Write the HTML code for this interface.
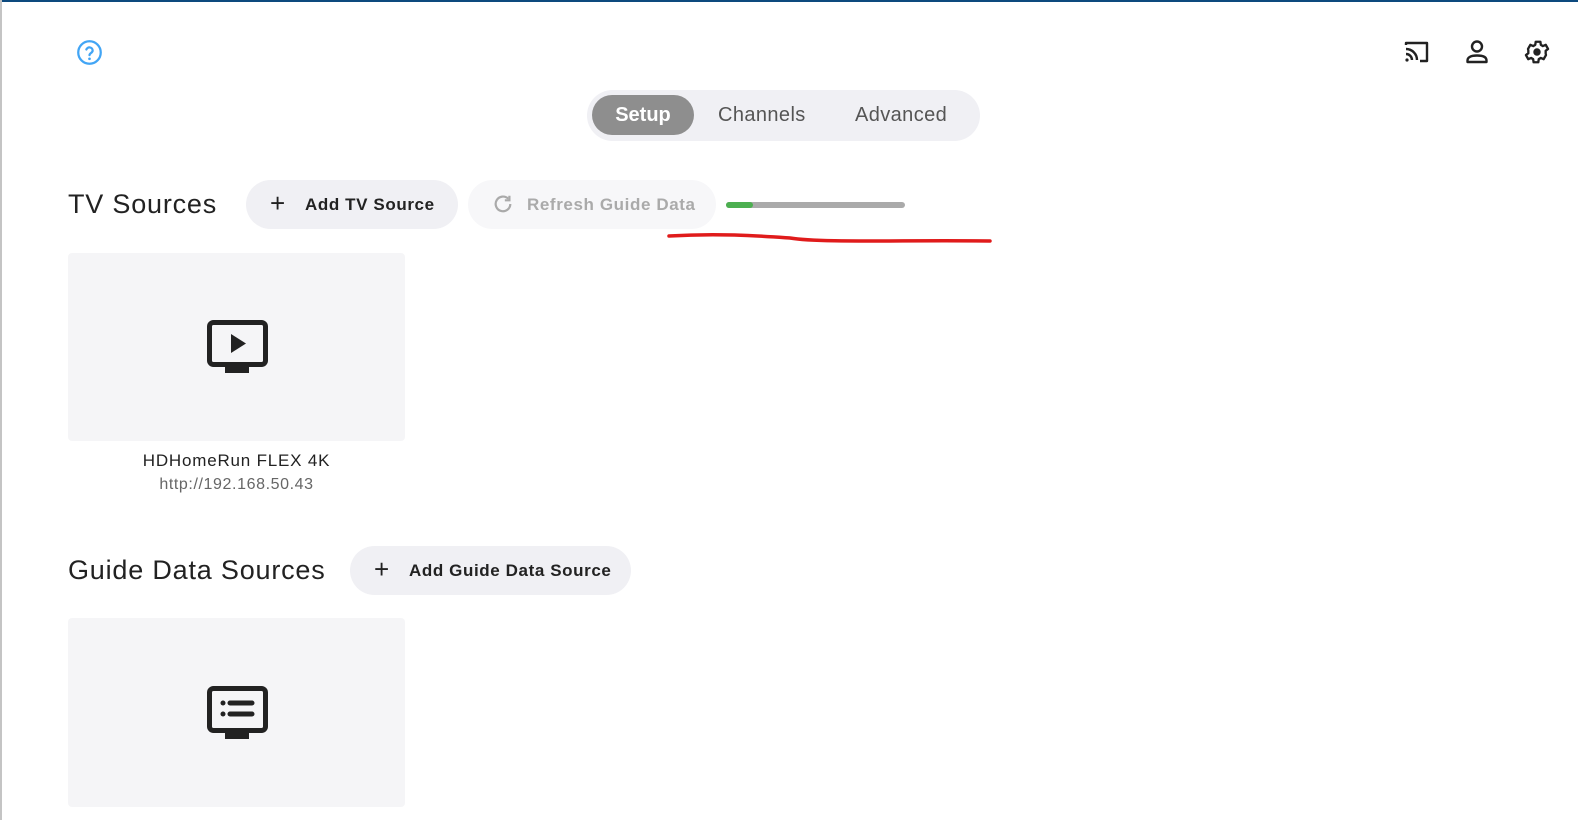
<!DOCTYPE html>
<html><head><meta charset="utf-8"><style>
body{margin:0;width:1578px;height:820px;overflow:hidden;background:#fff;font-family:"Liberation Sans",sans-serif;position:relative}
.a{position:absolute}
.top{left:0;top:0;width:1578px;height:2px;background:#0d4a7e}
.left{left:0;top:0;width:2px;height:820px;background:#c4c4c4}
.tabs{left:587px;top:90px;width:393px;height:51px;background:#f0f0f4;border-radius:26px}
.tab{position:absolute;top:0;height:51px;line-height:51px;font-size:20px;color:#555;letter-spacing:0.4px}
.setup{left:5px;top:5px;width:102px;height:40px;line-height:40px;background:#8e8e8e;color:#fff;font-weight:bold;border-radius:20px;text-align:center;position:absolute;font-size:20px}
h2{position:absolute;margin:0;font-size:27px;font-weight:normal;color:#222;letter-spacing:0.8px}
.btn{position:absolute;height:49px;border-radius:25px;background:#f0f0f4;font-size:17px;font-weight:bold;color:#222;line-height:49px;letter-spacing:0.6px}
.card{position:absolute;left:68px;width:337px;background:#f5f5f7;border-radius:4px}
</style></head><body>
<div class="a top"></div><div class="a left"></div>
<svg class="a" style="left:76px;top:39px" width="27" height="27" viewBox="0 0 24 24"><circle cx="12" cy="12" r="10" fill="none" stroke="#42a5f5" stroke-width="2"/><path d="M9.2 9.3a2.9 2.9 0 0 1 5.6 1c0 1.9-2.8 2.3-2.8 4" fill="none" stroke="#42a5f5" stroke-width="2" stroke-linecap="round"/><circle cx="12" cy="17.6" r="1.2" fill="#42a5f5"/></svg>
<svg class="a" style="left:1403px;top:39px" width="28" height="26" viewBox="0 0 28 26"><path d="M3 6V4h21v18h-7" fill="none" stroke="#222" stroke-width="2.4" stroke-linejoin="round"/><path d="M3 10a11 11 0 0 1 11 11M3 15a6 6 0 0 1 6 6" fill="none" stroke="#222" stroke-width="2.4"/><circle cx="4" cy="21" r="1.6" fill="#222"/></svg>
<svg class="a" style="left:1465px;top:39px" width="24" height="26" viewBox="0 0 24 26"><circle cx="12" cy="7.5" r="5" fill="none" stroke="#222" stroke-width="2.4"/><path d="M2.5 23v-1.5c0-3 3-5 9.5-5s9.5 2 9.5 5V23z" fill="none" stroke="#222" stroke-width="2.4" stroke-linejoin="round"/></svg>
<svg class="a" style="left:1523px;top:38px" width="28" height="28" viewBox="0 0 24 24"><path d="M19.4 13a7.5 7.5 0 0 0 0-2l2.1-1.6-2-3.5-2.5 1a7 7 0 0 0-1.7-1l-.4-2.7h-4l-.4 2.7a7 7 0 0 0-1.7 1l-2.5-1-2 3.5L4.6 11a7.5 7.5 0 0 0 0 2l-2.1 1.6 2 3.5 2.5-1a7 7 0 0 0 1.7 1l.4 2.7h4l.4-2.7a7 7 0 0 0 1.7-1l2.5 1 2-3.5z" fill="none" stroke="#222" stroke-width="2" stroke-linejoin="round"/><circle cx="12" cy="12" r="3.2" fill="#222"/></svg>
<div class="a tabs"><div class="setup">Setup</div><div class="tab" style="left:131px">Channels</div><div class="tab" style="left:268px">Advanced</div></div>
<h2 style="left:68px;top:189px">TV Sources</h2>
<div class="btn" style="left:246px;top:180px;width:212px"><span style="position:absolute;left:24px;font-size:26px;font-weight:normal;top:-1px">+</span><span style="position:absolute;left:59px">Add TV Source</span></div>
<div class="btn" style="left:468px;top:180px;width:248px;background:#f7f7f9;color:#aaa"><svg style="position:absolute;left:24px;top:13px" width="22" height="22" viewBox="0 0 24 24"><path d="M20 12a8 8 0 1 1-2.3-5.7" fill="none" stroke="#aaa" stroke-width="2.4"/><path d="M19 3v5h-5" fill="none" stroke="#aaa" stroke-width="2.4"/></svg><span style="position:absolute;left:59px">Refresh Guide Data</span></div>
<div class="a" style="left:726px;top:202px;width:179px;height:6px;background:#aaa;border-radius:3px"></div>
<div class="a" style="left:726px;top:202px;width:27px;height:6px;background:#4caf50;border-radius:3px"></div>
<svg class="a" style="left:0;top:0" width="1578" height="260"><path d="M669 236C720 233 760 236 790 238C820 243 900 240 990 241" fill="none" stroke="#e01b1b" stroke-width="3.5" stroke-linecap="round"/></svg>
<div class="card" style="top:253px;height:188px"><svg style="position:absolute;left:139px;top:67px" width="61" height="56" viewBox="0 0 61 56"><rect x="2.5" y="2.5" width="56" height="42" rx="4" fill="none" stroke="#222" stroke-width="5"/><rect x="18" y="44" width="24" height="9" fill="#222"/><path d="M24 14v19l15-9.5z" fill="#222"/></svg></div>
<div class="a" style="left:68px;width:337px;top:451px;text-align:center;font-size:17px;color:#222;letter-spacing:0.8px">HDHomeRun FLEX 4K</div>
<div class="a" style="left:68px;width:337px;top:476px;text-align:center;font-size:16px;color:#666;letter-spacing:0.6px">http://192.168.50.43</div>
<h2 style="left:68px;top:555px">Guide Data Sources</h2>
<div class="btn" style="left:350px;top:546px;width:281px"><span style="position:absolute;left:24px;font-size:26px;font-weight:normal;top:-1px">+</span><span style="position:absolute;left:59px">Add Guide Data Source</span></div>
<div class="card" style="top:618px;height:189px"><svg style="position:absolute;left:139px;top:68px" width="61" height="56" viewBox="0 0 61 56"><rect x="2.5" y="2.5" width="56" height="42" rx="4" fill="none" stroke="#222" stroke-width="5"/><rect x="18" y="44" width="24" height="9" fill="#222"/><circle cx="16" cy="17" r="2.5" fill="#222"/><circle cx="16" cy="28" r="2.5" fill="#222"/><path d="M23 17h22M23 28h22" stroke="#222" stroke-width="5" stroke-linecap="round"/></svg></div>
</body></html>
